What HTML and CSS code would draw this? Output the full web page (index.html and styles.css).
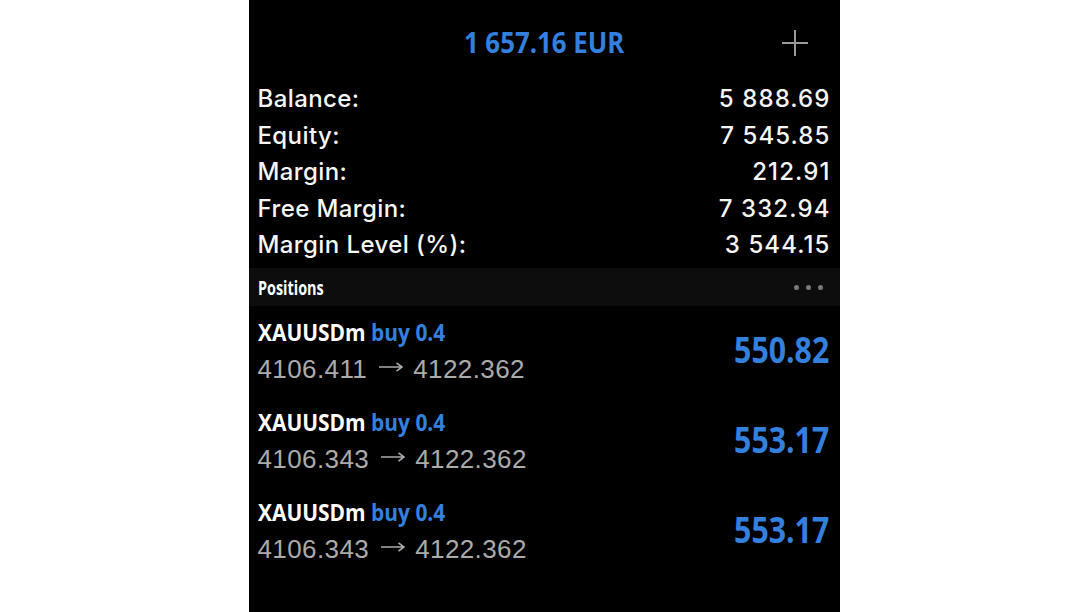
FILE: index.html
```html
<!DOCTYPE html>
<html>
<head>
<meta charset="utf-8">
<link rel="stylesheet" href="styles.css">
</head>
<body>
<div class="panel">
  <header class="top">
    <div class="title">1 657.16 EUR</div>
    <svg class="plus" width="26" height="28" viewBox="0 0 26 28"><path d="M13 1V27M0 14H26" stroke="#9a9a9a" stroke-width="2" fill="none"/></svg>
  </header>
  <section class="stats">
    <div class="stat"><span class="label">Balance:</span><span class="val">5 888.69</span></div>
    <div class="stat"><span class="label">Equity:</span><span class="val">7 545.85</span></div>
    <div class="stat"><span class="label">Margin:</span><span class="val">212.91</span></div>
    <div class="stat"><span class="label">Free Margin:</span><span class="val">7 332.94</span></div>
    <div class="stat"><span class="label">Margin Level (%):</span><span class="val">3 544.15</span></div>
  </section>
  <div class="band">
    <span class="band-title">Positions</span>
    <span class="dots"><i></i><i></i><i></i></span>
  </div>
  <section class="positions">
    <div class="pos">
      <div class="pos-left">
        <div class="sym">XAUUSDm <span class="side">buy 0.4</span></div>
        <div class="price">4106.411<svg class="arrow" width="24" height="12" viewBox="0 0 24 12"><path d="M0 6H23M17.5 1.8L23 6L17.5 10.2" stroke="#ababab" stroke-width="1.6" fill="none"/></svg>4122.362</div>
      </div>
      <div class="profit">550.82</div>
    </div>
    <div class="pos">
      <div class="pos-left">
        <div class="sym">XAUUSDm <span class="side">buy 0.4</span></div>
        <div class="price">4106.343<svg class="arrow" width="24" height="12" viewBox="0 0 24 12"><path d="M0 6H23M17.5 1.8L23 6L17.5 10.2" stroke="#ababab" stroke-width="1.6" fill="none"/></svg>4122.362</div>
      </div>
      <div class="profit">553.17</div>
    </div>
    <div class="pos">
      <div class="pos-left">
        <div class="sym">XAUUSDm <span class="side">buy 0.4</span></div>
        <div class="price">4106.343<svg class="arrow" width="24" height="12" viewBox="0 0 24 12"><path d="M0 6H23M17.5 1.8L23 6L17.5 10.2" stroke="#ababab" stroke-width="1.6" fill="none"/></svg>4122.362</div>
      </div>
      <div class="profit">553.17</div>
    </div>
  </section>
</div>
</body>
</html>
```
FILE: styles.css
```css
html, body {
  margin: 0;
  padding: 0;
  background: #ffffff;
}
.panel {
  width: 591px;
  height: 612px;
  margin: 0 auto;
  background: #000000;
  overflow: hidden;
  font-family: "Liberation Sans", Arial, sans-serif;
  color: #ffffff;
}
.top {
  height: 81px;
  padding-top: 1px;
  box-sizing: border-box;
  display: flex;
  align-items: center;
  justify-content: center;
  position: relative;
}
.title {
  display: inline-block;
  font-family: "Open Sans", sans-serif;
  font-weight: 700;
  font-size: 29px;
  color: #3380df;
  transform: scaleX(0.89);
  transform-origin: center;
}
.plus {
  position: absolute;
  right: 32px;
  top: 29px;
}
.stats {
  padding: 0 10px 0 9px;
}
.stat {
  display: flex;
  justify-content: space-between;
  height: 36.5px;
  line-height: 36.5px;
  font-family: "Inter", "Liberation Sans", sans-serif;
  font-weight: 500;
  font-size: 24px;
  color: #f6f6f6;
}
.label {
  letter-spacing: 0.4px;
}
.val {
  letter-spacing: 1.1px;
  margin-right: -1px;
}
.band {
  margin-top: 4.5px;
  height: 38px;
  background: #0d0d0d;
  display: flex;
  align-items: center;
  justify-content: space-between;
  padding: 0 17px 0 9px;
}
.band-title {
  display: inline-block;
  font-family: "Open Sans", sans-serif;
  font-weight: 700;
  font-size: 20px;
  color: #ffffff;
  transform: scaleX(0.72);
  transform-origin: left center;
}
.dots {
  display: flex;
  gap: 7px;
}
.dots i {
  width: 5px;
  height: 5px;
  border-radius: 50%;
  background: #7a7a7a;
}
.pos {
  height: 90px;
  display: flex;
  align-items: center;
  justify-content: space-between;
  padding: 0 10px 0 9px;
}
.pos-left {
  display: flex;
  flex-direction: column;
  align-items: flex-start;
  padding-top: 6px;
}
.sym {
  display: inline-block;
  font-family: "Open Sans", sans-serif;
  font-weight: 700;
  font-size: 23px;
  line-height: 30px;
  color: #ffffff;
  transform: scaleX(0.91);
  transform-origin: left center;
  white-space: nowrap;
}
.side {
  color: #3380df;
}
.price {
  font-size: 26px;
  line-height: 44px;
  letter-spacing: 0.4px;
  color: #ababab;
  white-space: nowrap;
}
.arrow {
  margin: 0 10px 0 12px;
  vertical-align: 5px;
}
.profit {
  display: inline-block;
  font-family: "Open Sans", sans-serif;
  font-weight: 700;
  font-size: 36px;
  color: #3380df;
  padding-bottom: 4px;
  transform: scaleX(0.84);
  transform-origin: right center;
}
```
